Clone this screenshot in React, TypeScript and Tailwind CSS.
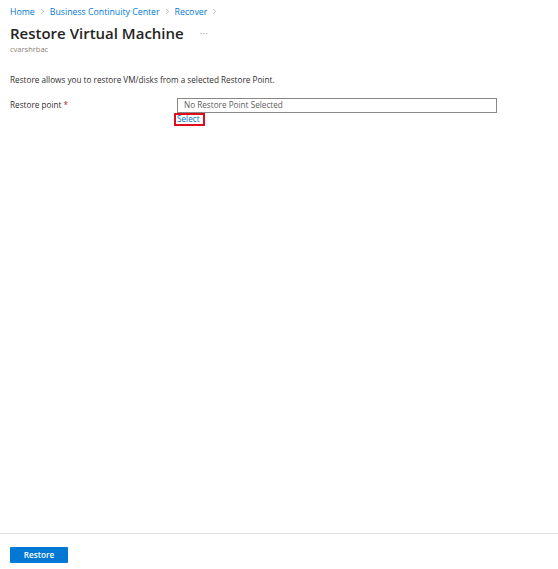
import { ChevronRight } from 'lucide-react';

const crumbs = ['Home', 'Business Continuity Center', 'Recover'];

export default function App() {
  return (
    <div className="flex h-[569px] w-[558px] flex-col overflow-hidden bg-white font-['Open_Sans',sans-serif] text-[8.2px] text-[#323130]">
      <div className="flex-1 px-[10px] pt-[6px]">
        {/* Breadcrumb */}
        <nav className="flex h-[12px] items-center text-[8.75px] text-[#0078d4]">
          {crumbs.map((c) => (
            <span key={c} className="flex h-[12px] items-center">
              <span className="leading-[12px]">{c}</span>
              <ChevronRight className="mx-[3px] mb-[1px] h-[9px] w-[9px] text-[#8a8886]" strokeWidth={1.5} />
            </span>
          ))}
        </nav>

        {/* Title */}
        <div className="mt-[5px] flex h-[20px] items-center">
          <h1 className="text-[15px] font-semibold leading-[20px] text-[#252423]">Restore Virtual Machine</h1>
          <span className="ml-[16px] text-[9px] leading-none tracking-[0.5px] text-[#8a8886]">···</span>
        </div>
        <div className="mt-[1px] h-[10px] text-[7.5px] leading-[10px] text-[#8a7f78]">cvarshrbac</div>

        <p className="mt-[20px] h-[12px] leading-[12px]">Restore allows you to restore VM/disks from a selected Restore Point.</p>

        {/* Restore point field */}
        <div className="mt-[12px] flex">
          <label className="w-[167px] pt-[1px] leading-[12px]">
            Restore point <span className="text-[#a4262c]">*</span>
          </label>
          <div className="flex flex-col">
            <div className="flex h-[15px] w-[320px] items-center border border-[#8a8886] px-[6px] text-[#605e5c]">
              No Restore Point Selected
            </div>
            <a className="-ml-[3px] flex h-[13px] w-[31px] items-center border-2 border-[#e00c1c] pl-[1px] text-[#0072c6]">
              Select
            </a>
          </div>
        </div>
      </div>

      {/* Footer */}
      <div className="h-[36px] border-t border-[#e1dfdd] px-[10px] pt-[13px]">
        <button className="flex h-[16px] w-[58px] items-center justify-center rounded-[1px] bg-[#0078d4] text-[8.2px] font-semibold text-white">
          Restore
        </button>
      </div>
    </div>
  );
}
